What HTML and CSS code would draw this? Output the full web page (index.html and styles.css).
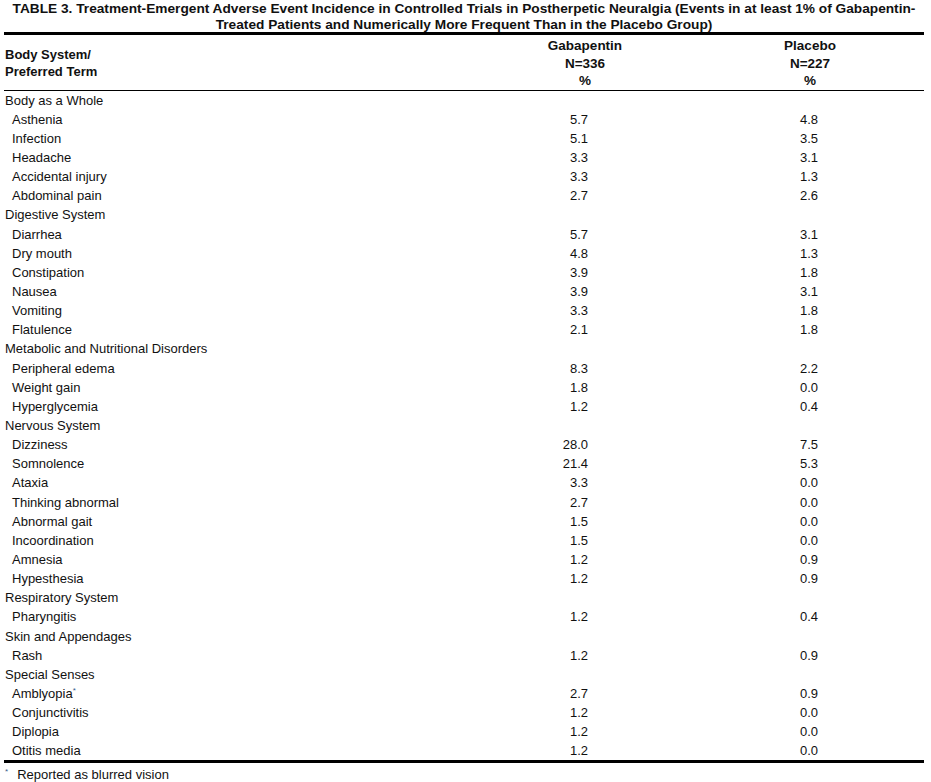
FILE: index.html
```html
<!DOCTYPE html>
<html>
<head>
<meta charset="utf-8">
<link rel="stylesheet" href="styles.css">
</head>
<body>
<div class="page">
  <h1 class="title">TABLE 3. Treatment-Emergent Adverse Event Incidence in Controlled Trials in Postherpetic Neuralgia (Events in at least 1% of Gabapentin-<br>Treated Patients and Numerically More Frequent Than in the Placebo Group)</h1>
  <table class="ae">
    <colgroup>
      <col class="c-term"><col class="c-gab"><col class="c-gap"><col class="c-pla"><col class="c-end">
    </colgroup>
    <thead>
      <tr>
        <th class="h-term">Body System/<br>Preferred Term</th>
        <th class="h-num">Gabapentin<br>N=336<br>%</th>
        <th></th>
        <th class="h-num">Placebo<br>N=227<br>%</th>
        <th></th>
      </tr>
    </thead>
    <tbody>
      <tr class="cat"><td>Body as a Whole</td><td></td><td></td><td></td><td></td></tr>
      <tr><td class="sub">Asthenia</td><td class="g">5.7</td><td></td><td class="p">4.8</td><td></td></tr>
      <tr><td class="sub">Infection</td><td class="g">5.1</td><td></td><td class="p">3.5</td><td></td></tr>
      <tr><td class="sub">Headache</td><td class="g">3.3</td><td></td><td class="p">3.1</td><td></td></tr>
      <tr><td class="sub">Accidental injury</td><td class="g">3.3</td><td></td><td class="p">1.3</td><td></td></tr>
      <tr><td class="sub">Abdominal pain</td><td class="g">2.7</td><td></td><td class="p">2.6</td><td></td></tr>
      <tr class="cat"><td>Digestive System</td><td></td><td></td><td></td><td></td></tr>
      <tr><td class="sub">Diarrhea</td><td class="g">5.7</td><td></td><td class="p">3.1</td><td></td></tr>
      <tr><td class="sub">Dry mouth</td><td class="g">4.8</td><td></td><td class="p">1.3</td><td></td></tr>
      <tr><td class="sub">Constipation</td><td class="g">3.9</td><td></td><td class="p">1.8</td><td></td></tr>
      <tr><td class="sub">Nausea</td><td class="g">3.9</td><td></td><td class="p">3.1</td><td></td></tr>
      <tr><td class="sub">Vomiting</td><td class="g">3.3</td><td></td><td class="p">1.8</td><td></td></tr>
      <tr><td class="sub">Flatulence</td><td class="g">2.1</td><td></td><td class="p">1.8</td><td></td></tr>
      <tr class="cat"><td>Metabolic and Nutritional Disorders</td><td></td><td></td><td></td><td></td></tr>
      <tr><td class="sub">Peripheral edema</td><td class="g">8.3</td><td></td><td class="p">2.2</td><td></td></tr>
      <tr><td class="sub">Weight gain</td><td class="g">1.8</td><td></td><td class="p">0.0</td><td></td></tr>
      <tr><td class="sub">Hyperglycemia</td><td class="g">1.2</td><td></td><td class="p">0.4</td><td></td></tr>
      <tr class="cat"><td>Nervous System</td><td></td><td></td><td></td><td></td></tr>
      <tr><td class="sub">Dizziness</td><td class="g">28.0</td><td></td><td class="p">7.5</td><td></td></tr>
      <tr><td class="sub">Somnolence</td><td class="g">21.4</td><td></td><td class="p">5.3</td><td></td></tr>
      <tr><td class="sub">Ataxia</td><td class="g">3.3</td><td></td><td class="p">0.0</td><td></td></tr>
      <tr><td class="sub">Thinking abnormal</td><td class="g">2.7</td><td></td><td class="p">0.0</td><td></td></tr>
      <tr><td class="sub">Abnormal gait</td><td class="g">1.5</td><td></td><td class="p">0.0</td><td></td></tr>
      <tr><td class="sub">Incoordination</td><td class="g">1.5</td><td></td><td class="p">0.0</td><td></td></tr>
      <tr><td class="sub">Amnesia</td><td class="g">1.2</td><td></td><td class="p">0.9</td><td></td></tr>
      <tr><td class="sub">Hypesthesia</td><td class="g">1.2</td><td></td><td class="p">0.9</td><td></td></tr>
      <tr class="cat"><td>Respiratory System</td><td></td><td></td><td></td><td></td></tr>
      <tr><td class="sub">Pharyngitis</td><td class="g">1.2</td><td></td><td class="p">0.4</td><td></td></tr>
      <tr class="cat"><td>Skin and Appendages</td><td></td><td></td><td></td><td></td></tr>
      <tr><td class="sub">Rash</td><td class="g">1.2</td><td></td><td class="p">0.9</td><td></td></tr>
      <tr class="cat"><td>Special Senses</td><td></td><td></td><td></td><td></td></tr>
      <tr><td class="sub">Amblyopia<sup class="star">*</sup></td><td class="g">2.7</td><td></td><td class="p">0.9</td><td></td></tr>
      <tr><td class="sub">Conjunctivitis</td><td class="g">1.2</td><td></td><td class="p">0.0</td><td></td></tr>
      <tr><td class="sub">Diplopia</td><td class="g">1.2</td><td></td><td class="p">0.0</td><td></td></tr>
      <tr><td class="sub">Otitis media</td><td class="g">1.2</td><td></td><td class="p">0.0</td><td></td></tr>
    </tbody>
  </table>
  <p class="note"><sup class="star fn">*</sup>Reported as blurred vision</p>
</div>
</body>
</html>
```
FILE: styles.css
```css
html, body {
  margin: 0;
  padding: 0;
  background: #ffffff;
}
body {
  font-family: "Liberation Sans", Arial, sans-serif;
  font-size: 13px;
  color: #111111;
}
.page {
  width: 931px;
  padding: 0 7px 0 4px;
  box-sizing: border-box;
}
.title {
  margin: 0;
  font-size: 13.7px;
  font-weight: bold;
  line-height: 16px;
  text-align: center;
  color: #111111;
  padding-top: 1px;
  border-bottom: 3px solid #000000;
  height: 31px;
  white-space: nowrap;
}
.ae {
  width: 920px;
  border-collapse: collapse;
  table-layout: fixed;
  border-bottom: 3px solid #000000;
}
.c-term { width: 541px; }
.c-gab { width: 80px; }
.c-gap { width: 145px; }
.c-pla { width: 80px; }
.c-end { width: 74px; }
.ae th {
  font-weight: bold;
  font-size: 13.5px;
  line-height: 17.5px;
  padding: 2px 0 0 0;
  height: 52px;
  vertical-align: middle;
  border-bottom: 1px solid #000000;
}
.ae .h-term {
  text-align: left;
  padding-left: 1px;
  font-size: 13px;
}
.ae .h-num {
  text-align: center;
  vertical-align: top;
}
.ae td {
  padding: 0;
  height: 19.15px;
  line-height: 19px;
  white-space: nowrap;
}
.cat td:first-child {
  padding-left: 1px;
}
.ae td.sub {
  padding-left: 8px;
}
.ae td.g {
  text-align: right;
  padding-right: 37px;
}
.ae td.p {
  text-align: left;
  padding-left: 30px;
}
.star {
  font-size: 8px;
  line-height: 0;
  vertical-align: 5px;
  color: #3a5a8c;
}
.note {
  margin: 0;
  padding-top: 2px;
  line-height: 19px;
  padding-left: 1px;
}
.star.fn {
  margin-right: 9px;
}
```
